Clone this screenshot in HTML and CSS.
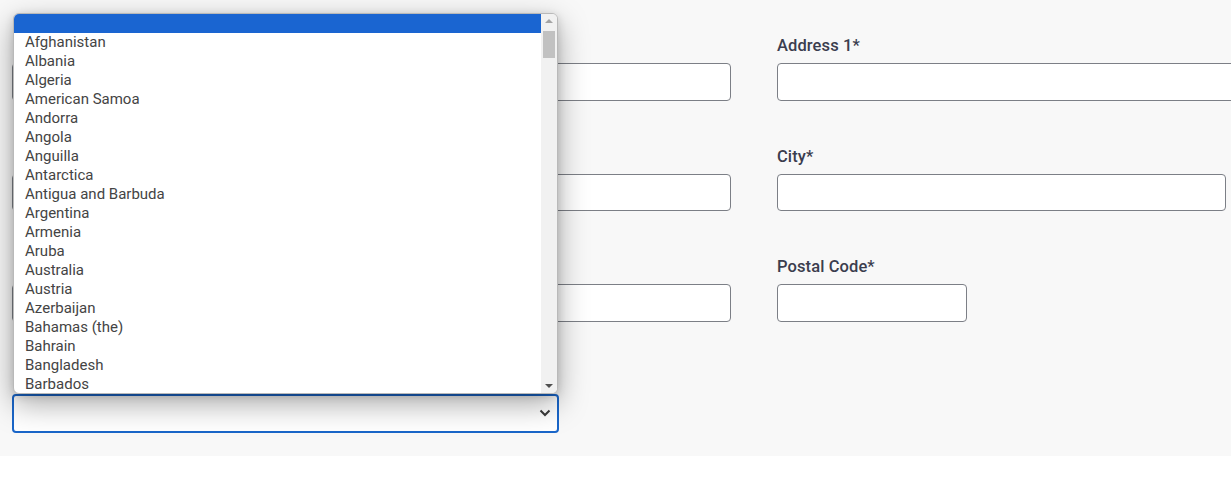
FILE: index.html
```html
<!DOCTYPE html>
<html lang="en">
<head>
<meta charset="utf-8">
<title>Address form</title>
<link rel="stylesheet" href="styles.css">
</head>
<body>
<div class="page">
  <form class="form">
    <div class="col col-left">
      <div class="field">
        <label class="label">First Name*</label>
        <div class="input input-full"></div>
      </div>
      <div class="field">
        <label class="label">Last Name*</label>
        <div class="input input-full"></div>
      </div>
      <div class="field">
        <label class="label">State / Province*</label>
        <div class="input input-full"></div>
      </div>
      <div class="field">
        <label class="label">Country*</label>
        <div class="select">
          <svg class="chev" width="12" height="8" viewBox="0 0 12 8"><path d="M1.5 1.5 L6 6 L10.5 1.5" fill="none" stroke="#3a3a3a" stroke-width="2"/></svg>
        </div>
      </div>
    </div>
    <div class="col col-right">
      <div class="field">
        <label class="label">Address 1*</label>
        <div class="input input-wide"></div>
      </div>
      <div class="field">
        <label class="label">City*</label>
        <div class="input input-city"></div>
      </div>
      <div class="field">
        <label class="label">Postal Code*</label>
        <div class="input input-postal"></div>
      </div>
    </div>
  </form>

  <div class="popup">
    <ul class="options">
      <li class="opt opt-selected">&nbsp;</li>
      <li class="opt">Afghanistan</li>
      <li class="opt">Albania</li>
      <li class="opt">Algeria</li>
      <li class="opt">American Samoa</li>
      <li class="opt">Andorra</li>
      <li class="opt">Angola</li>
      <li class="opt">Anguilla</li>
      <li class="opt">Antarctica</li>
      <li class="opt">Antigua and Barbuda</li>
      <li class="opt">Argentina</li>
      <li class="opt">Armenia</li>
      <li class="opt">Aruba</li>
      <li class="opt">Australia</li>
      <li class="opt">Austria</li>
      <li class="opt">Azerbaijan</li>
      <li class="opt">Bahamas (the)</li>
      <li class="opt">Bahrain</li>
      <li class="opt">Bangladesh</li>
      <li class="opt">Barbados</li>
    </ul>
    <div class="scrollbar">
      <span class="arrow arrow-up"></span>
      <div class="track"><div class="thumb"></div></div>
      <span class="arrow arrow-down"></span>
    </div>
  </div>
</div>
</body>
</html>
```

FILE: styles.css
```css
* { box-sizing: border-box; }

html, body {
  margin: 0;
  padding: 0;
  background: #ffffff;
  font-family: Roboto, "Liberation Sans", sans-serif;
}

.page {
  position: relative;
  width: 1231px;
  height: 481px;
  overflow: hidden;
}

.form {
  display: grid;
  grid-template-columns: 719px 1fr;
  column-gap: 46px;
  padding: 36px 0 23px 12px;
  background: #f8f8f8;
  height: 456px;
}

.col {
  display: flex;
  flex-direction: column;
  gap: 46px;
}

.field {
  display: flex;
  flex-direction: column;
  gap: 7px;
}

.label {
  font-size: 16.5px;
  line-height: 20px;
  font-weight: 500;
  letter-spacing: 0.1px;
  color: #3b3d4e;
}

.col-left .label { padding-left: 6px; }

.input {
  height: 37.6px;
  background: #ffffff;
  border: 1px solid #7c7f86;
  border-radius: 4px;
}

.input-full { width: 719px; }
.input-wide { width: 719px; }
.input-city { width: 449px; }
.input-postal { width: 190px; }

.select {
  width: 547px;
  height: 39px;
  margin-top: -1px;
  background: #ffffff;
  border: 2px solid #1a66c9;
  border-radius: 4px;
  display: flex;
  align-items: center;
  justify-content: flex-end;
  padding-right: 6px;
}

.chev { display: block; }

/* open native-like dropdown list */
.popup {
  position: absolute;
  left: 13px;
  top: 13px;
  width: 545px;
  height: 381px;
  background: #ffffff;
  border: 1px solid #b9b9b9;
  border-radius: 6px;
  box-shadow: 0 10px 30px rgba(0, 0, 0, 0.34), 0 2px 8px rgba(0, 0, 0, 0.14);
  display: flex;
  overflow: hidden;
}

.options {
  list-style: none;
  margin: 0;
  padding: 0;
  flex: 1;
}

.opt {
  height: 19px;
  line-height: 19px;
  padding-left: 11px;
  font-size: 15px;
  color: #444444;
  white-space: nowrap;
}

.opt-selected {
  background: #1a65d1;
}

.scrollbar {
  width: 16px;
  background: #f1f1f1;
  display: flex;
  flex-direction: column;
  align-items: center;
}

.arrow {
  display: block;
  width: 0;
  height: 0;
  border-left: 4px solid transparent;
  border-right: 4px solid transparent;
}

.arrow-up {
  margin-top: 5px;
  border-bottom: 4px solid #a3a3a3;
}

.arrow-down {
  margin-bottom: 5px;
  border-top: 4px solid #505050;
}

.track {
  flex: 1;
  width: 100%;
  padding: 8px 2px 0;
}

.thumb {
  height: 27px;
  background: #c1c1c1;
}
```
